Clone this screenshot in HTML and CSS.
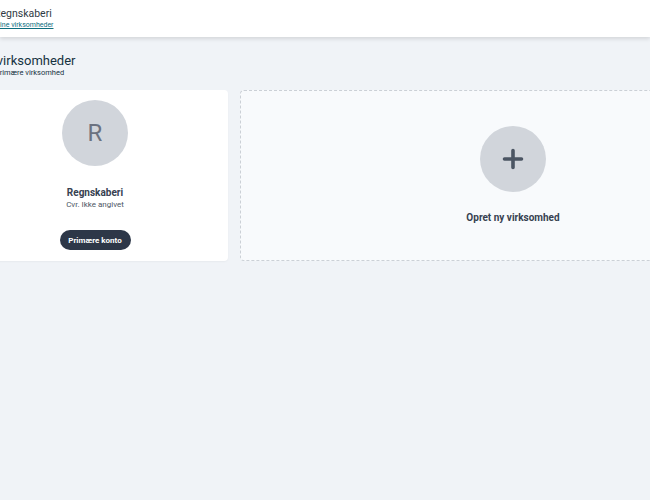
FILE: index.html
```html
<!DOCTYPE html>
<html lang="da">
<head>
<meta charset="utf-8">
<link rel="stylesheet" href="styles.css">
</head>
<body>
<header class="topbar">
  <div class="brand">
    <div class="brand-name">Regnskaberi</div>
    <a class="brand-link" href="#">Mine virksomheder</a>
  </div>
</header>
<main class="page">
  <div class="title-block">
    <h1 class="title">Mine virksomheder</h1>
    <div class="subtitle">Primære virksomhed</div>
  </div>
  <div class="grid">
    <div class="card">
      <div class="avatar">R</div>
      <div class="card-name">Regnskaberi</div>
      <div class="card-cvr">Cvr. Ikke angivet</div>
      <button class="pill">Primære konto</button>
    </div>
    <div class="card card-new">
      <div class="avatar avatar-plus">
        <svg width="22" height="22" viewBox="0 0 22 22"><path d="M11 2.5v17M2.5 11h17" stroke="#4b5563" stroke-width="3.6" stroke-linecap="round" fill="none"/></svg>
      </div>
      <div class="card-name new-label">Opret ny virksomhed</div>
    </div>
  </div>
</main>
</body>
</html>
```
FILE: styles.css
```css
* { box-sizing: border-box; }
html, body { margin: 0; padding: 0; }
body {
  background: #f0f3f7;
  font-family: Roboto, "Liberation Sans", sans-serif;
  color: #1f2937;
  width: 650px;
  height: 500px;
  overflow: hidden;
}
.topbar {
  background: #fff;
  height: 37px;
  box-shadow: 0 2px 4px rgba(0,0,0,0.12);
  display: flex;
  align-items: center;
  position: relative;
}
.brand { margin-left: -6px; padding-top: 1px; }
.brand-name { font-size: 10.5px; color: #2f3a44; line-height: 12px; }
.brand-link { font-size: 7px; color: #0e6e7e; text-decoration: underline; line-height: 10px; display: block; }
.page { margin-left: -38px; padding-top: 17px; }
.title-block { padding-left: 33px; }
.title { margin: 0 0 0 -30px; font-size: 13px; font-weight: 400; color: #16323f; line-height: 14px; white-space: nowrap; }
.subtitle { font-size: 7.5px; color: #16323f; line-height: 10px; }
.grid {
  display: grid;
  grid-template-columns: 266px 546px;
  gap: 12px;
  margin-top: 12px;
}
.card {
  background: #fff;
  border-radius: 4px;
  height: 171px;
  display: flex;
  flex-direction: column;
  align-items: center;
  padding-top: 10px;
  box-shadow: 0 1px 2px rgba(0,0,0,0.04);
}
.avatar {
  width: 66px; height: 66px;
  flex: none;
  border-radius: 50%;
  background: #d1d5db;
  color: #6b7280;
  font-size: 24px;
  display: flex; align-items: center; justify-content: center;
}
.card-name { margin-top: 21px; font-size: 10px; font-weight: 700; color: #374151; line-height: 12px; }
.card-cvr { font-size: 8px; color: #4b5563; margin-top: 1px; line-height: 10px; }
.pill {
  margin-top: 20px;
  background: #2d3748;
  color: #fff;
  border: none;
  border-radius: 10px;
  height: 20px;
  width: 71px;
  padding: 0;
  font-family: inherit;
  font-size: 8px;
  font-weight: 700;
}
.card-new {
  background: #f8fafc;
  border: 1px dashed #cbd0d6;
  box-shadow: none;
  padding-top: 35px;
}
.new-label { margin-top: 20px; }
```
